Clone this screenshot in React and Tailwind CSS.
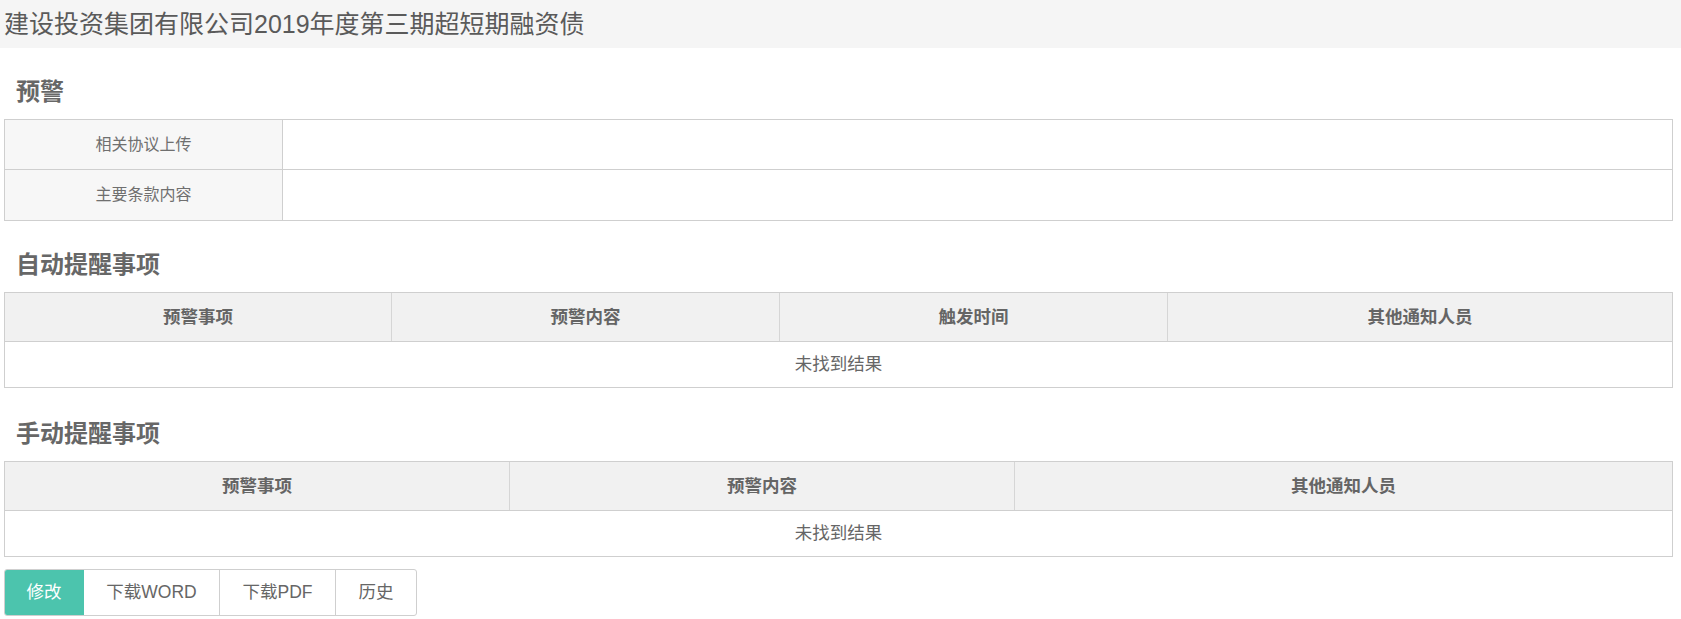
const FONT = "font-['Liberation_Sans','Noto_Sans_CJK_SC',sans-serif]";

function Heading({ children }) {
  return (
    <h4 className="pt-[28px] mb-[11px] pl-[12px] h-[60px] flex items-end">
      <span className="text-[24px] leading-[32px] font-bold text-[#676767]">{children}</span>
    </h4>
  );
}

function InfoTable() {
  const rows = ['相关协议上传', '主要条款内容'];
  return (
    <div className="border border-[#cfcfcf]">
      {rows.map((label, i) => (
        <div key={label} className={'flex h-[50px] ' + (i === 0 ? 'border-b border-[#cfcfcf]' : '')}>
          <div className="w-[278px] shrink-0 bg-[#f7f7f7] border-r border-[#cfcfcf] flex items-center justify-center text-[16px] text-[#6f6f6f]">
            {label}
          </div>
          <div className="flex-1" />
        </div>
      ))}
    </div>
  );
}

function ResultTable({ cols, widths }) {
  return (
    <div className="border border-[#cfcfcf]">
      <div className="flex h-[49px] bg-[#f1f1f1] border-b border-[#cfcfcf]">
        {cols.map((c, i) => (
          <div
            key={c}
            className={
              'flex items-center justify-center text-[17.5px] font-bold text-[#656565] ' +
              (i < cols.length - 1 ? 'border-r border-[#d6d6d6] shrink-0' : 'flex-1')
            }
            style={i < cols.length - 1 ? { width: widths[i] } : undefined}
          >
            {c}
          </div>
        ))}
      </div>
      <div className="h-[45px] flex items-center justify-center text-[17.5px] text-[#666]">未找到结果</div>
    </div>
  );
}

export default function App() {
  return (
    <div className={'min-h-screen bg-white ' + FONT}>
      <div className="h-[48px] bg-[#f5f5f5] flex items-center pl-[4px]">
        <h3 className="text-[25px] text-[#5a5a5a] leading-none">建设投资集团有限公司2019年度第三期超短期融资债</h3>
      </div>

      <div className="pl-[4px] pr-[8px]">
        <Heading>预警</Heading>
        <InfoTable />

        <Heading>自动提醒事项</Heading>
        <ResultTable cols={['预警事项', '预警内容', '触发时间', '其他通知人员']} widths={[387, 388, 388]} />

        <div className="h-[2px]" />
        <Heading>手动提醒事项</Heading>
        <ResultTable cols={['预警事项', '预警内容', '其他通知人员']} widths={[505, 505]} />

        <div className="mt-[12px] inline-flex h-[47px] text-[17.5px] rounded-[3px] overflow-hidden border border-[#cfcfcf]">
          <button className="w-[80px] bg-[#4cc4ad] text-white -my-px -ml-px">修改</button>
          <button className="w-[136px] text-[#666] border-r border-[#cfcfcf]">下载WORD</button>
          <button className="w-[116px] text-[#666] border-r border-[#cfcfcf]">下载PDF</button>
          <button className="w-[80px] text-[#666]">历史</button>
        </div>
      </div>
    </div>
  );
}
